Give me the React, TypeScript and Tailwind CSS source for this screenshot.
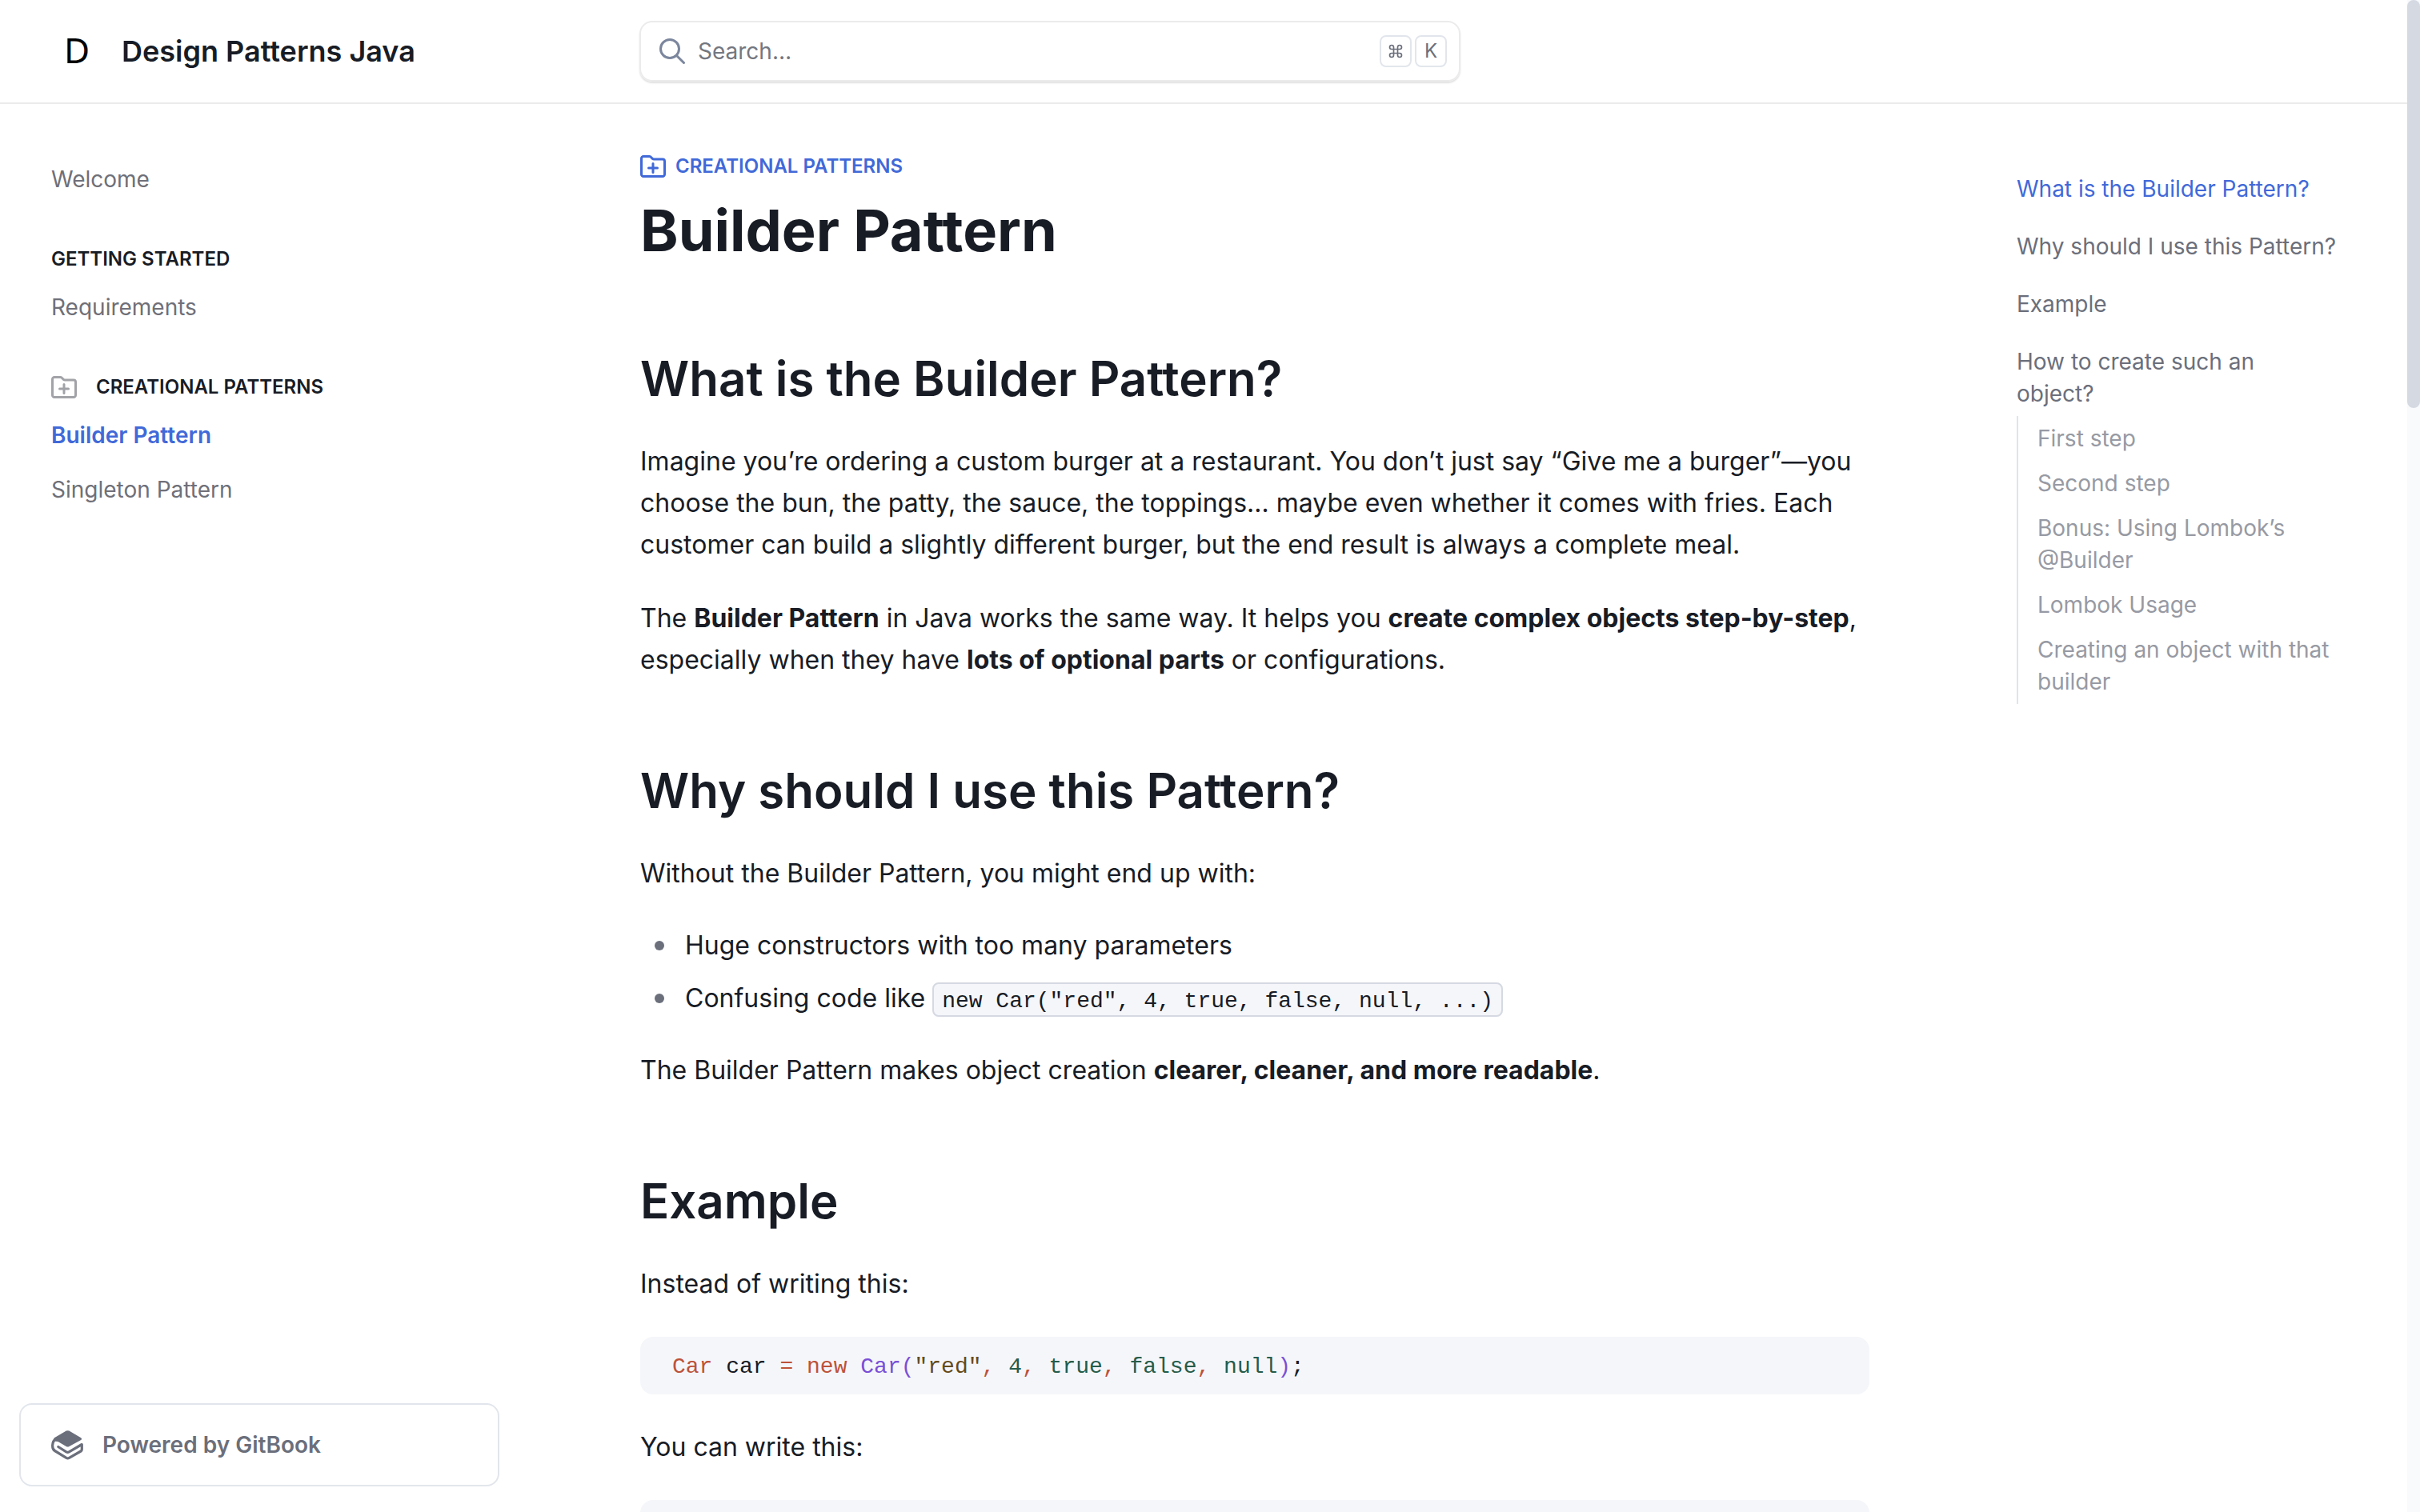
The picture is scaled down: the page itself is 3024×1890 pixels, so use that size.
import React from "react";
import { Command } from "lucide-react";

function FolderPlusIcon({ className }: { className: string }) {
  return (
    <svg viewBox="0 0 32 32" fill="none" stroke="currentColor" strokeWidth="3" strokeLinecap="round" strokeLinejoin="round" className={className} aria-hidden="true">
      <path d="M4 3.5h7.4c.7 0 1.3.3 1.8.7l2.200 2.200c.5.500 1.100.7 1.800.7H28a2.500 2.500 0 0 1 2.500 2.500V26a2.500 2.500 0 0 1-2.500 2.500H4A2.500 2.500 0 0 1 1.500 26V6A2.500 2.500 0 0 1 4 3.500Z" />
      <path d="M16 12.500v11M10.500 18h11" />
    </svg>
  );
}

function SearchIcon() {
  return (
    <svg viewBox="0 0 32 32" fill="none" stroke="currentColor" strokeWidth="3" strokeLinecap="round" className="size-8 shrink-0 text-[#7b869d]" aria-hidden="true">
      <circle cx="13" cy="13" r="11.500" />
      <path d="m21.500 21.500 9 9" />
    </svg>
  );
}

function GitBookIcon() {
  return (
    <svg viewBox="0 0 40 40" fill="currentColor" className="size-10 shrink-0" aria-hidden="true">
      <path d="M18.800 2.600a4 4 0 0 1 3.600 0l14.800 8.600c1.100.7 1.100 2.100 0 2.800L22.500 22a4 4 0 0 1-3.800 0L8.500 16 4 15.500 3.500 11.500z" />
      <path
        fill="none"
        stroke="currentColor"
        strokeWidth="3.200"
        strokeLinejoin="round"
        strokeLinecap="round"
        d="M6 12.500C.8 15.500.2 25 4.500 27.500L18.900 36.300a3.500 3.500 0 0 0 3.500 0L37 28a2.500 2.500 0 0 0 1.300-2.200V19.500L22.300 28.800a3.500 3.500 0 0 1-3.500 0L8.800 22.500"
      />
    </svg>
  );
}

function NavLink({ children, active }: { children: React.ReactNode; active?: boolean }) {
  return (
    <li>
      <a href="#" className={active ? "block py-3 text-[28px] leading-10 font-semibold text-[#4169d8]" : "block py-3 text-[28px] leading-10 text-[#6f7078]"}>
        {children}
      </a>
    </li>
  );
}

function H2({ children }: { children: React.ReactNode }) {
  return <h2 className="mt-15 text-[60px] leading-[75px] font-semibold">{children}</h2>;
}

function Bullet({ children }: { children: React.ReactNode }) {
  return (
    <li className="flex items-center gap-2">
      <span className="flex w-12 justify-center">
        <span className="size-3 rounded-full bg-[#6b6f7b]" />
      </span>
      <span>{children}</span>
    </li>
  );
}

const tocTop = ["Why should I use this Pattern?", "Example", "How to create such an object?"];
const tocSub = ["First step", "Second step", "Bonus: Using Lombok’s @Builder", "Lombok Usage", "Creating an object with that builder"];

export default function App() {
  return (
    <div className="flex h-screen overflow-hidden bg-white font-['Inter',sans-serif] text-[#181c25]">
      <div className="flex min-w-0 flex-1 flex-col">
        <header className="flex h-[130px] shrink-0 items-center border-b-2 border-[#ebebec] px-16">
          <a href="#" className="flex w-[735px] shrink-0 items-center gap-6">
            <span className="flex size-16 items-center justify-center pb-1 font-['Noto_Sans',sans-serif] text-[44px] text-black">D</span>
            <span className="text-4xl font-semibold">Design Patterns Java</span>
          </a>
          <div className="flex h-[76px] w-[1026px] items-center gap-4 rounded-2xl border-2 border-[#ebebec] pr-[15px] pl-[23px] shadow-[0_2px_2px_rgba(0,0,0,0.12)]">
            <SearchIcon />
            <input type="text" aria-label="Search" placeholder="Search…" className="min-w-0 flex-1 text-[28px] leading-10 outline-none placeholder:text-[#74777f]" />
            <div className="flex gap-1 text-2xl text-[#6b6f7b]">
              <kbd className="flex size-10 items-center justify-center rounded-lg border-2 border-[#e2e6ec]">
                <Command className="size-5" />
              </kbd>
              <kbd className="flex size-10 items-center justify-center rounded-lg border-2 border-[#e2e6ec] font-['Inter',sans-serif]">K</kbd>
            </div>
          </div>
        </header>

        <div className="flex min-h-0 flex-1 px-16">
          <aside className="-ml-10 flex w-[600px] shrink-0 flex-col justify-between pb-8">
            <nav className="flex flex-col gap-10 px-10 pt-[62px]" aria-label="Pages">
              <ul>
                <NavLink>Welcome</NavLink>
              </ul>
              <section>
                <h3 className="py-3 text-2xl leading-8 font-semibold">GETTING STARTED</h3>
                <ul>
                  <NavLink>Requirements</NavLink>
                </ul>
              </section>
              <section>
                <h3 className="flex items-center gap-6 py-3 text-2xl leading-8 font-semibold">
                  <FolderPlusIcon className="size-8 text-[#a2a3a8]" />
                  CREATIONAL PATTERNS
                </h3>
                <ul className="flex flex-col gap-1">
                  <NavLink active>Builder Pattern</NavLink>
                  <NavLink>Singleton Pattern</NavLink>
                </ul>
              </section>
            </nav>
            <a href="#" className="flex h-[104px] items-center gap-6 rounded-2xl border-2 border-[#e2e6ec] px-[38px] text-[28px] leading-10 font-semibold text-[#6b6f7b]">
              <GitBookIcon />
              Powered by GitBook
            </a>
          </aside>

          <main className="min-w-0 flex-1 pl-44">
            <article className="flex max-w-[1536px] flex-col gap-10 pt-[62px] text-[32px] leading-[52px]">
              <header className="flex flex-col gap-4">
                <a href="#" className="flex items-center gap-3 text-2xl leading-8 font-semibold text-[#4169d8]">
                  <FolderPlusIcon className="size-8" />
                  CREATIONAL PATTERNS
                </a>
                <h1 className="text-7xl leading-24 font-bold">Builder Pattern</h1>
              </header>
              <H2>What is the Builder Pattern?</H2>
              <p>
                Imagine you’re ordering a custom burger at a restaurant. You don’t just say “Give me a burger”—you choose the bun, the patty, the sauce, the toppings… maybe even whether it comes with fries. Each customer can build a slightly different burger, but the end result is always a complete meal.
              </p>
              <p>
                The <strong>Builder Pattern</strong> in Java works the same way. It helps you <strong>create complex objects step-by-step</strong>, especially when they have <strong>lots of optional parts</strong> or configurations.
              </p>
              <H2>Why should I use this Pattern?</H2>
              <p>Without the Builder Pattern, you might end up with:</p>
              <ul className="flex flex-col gap-[18px] leading-12">
                <Bullet>Huge constructors with too many parameters</Bullet>
                <Bullet>
                  Confusing code like{" "}
                  <code className="rounded-lg border-2 border-[#d5d9e2] bg-[#f5f6fa] px-[10px] pt-1.5 pb-0.5 font-['Liberation_Mono',monospace] text-[28px] leading-8">new Car("red", 4, true, false, null, ...)</code>
                </Bullet>
              </ul>
              <p>
                The Builder Pattern makes object creation <strong>clearer, cleaner, and more readable</strong>.
              </p>
              <H2>Example</H2>
              <p>Instead of writing this:</p>
              <pre className="rounded-2xl bg-[#f5f6fa] px-10 pt-4.5 pb-3.5 font-['Liberation_Mono',monospace] text-[28px] leading-10">
                <code>
                  <span className="text-[#bd5238]">Car</span> car <span className="text-[#bd5238]">=</span> <span className="text-[#bd5238]">new</span> <span className="text-[#7a4fd6]">Car(</span>
                  <span className="text-[#654a17]">"red"</span>
                  <span className="text-[#bd5238]">,</span> <span className="text-[#265c4a]">4</span>
                  <span className="text-[#bd5238]">,</span> <span className="text-[#265c4a]">true</span>
                  <span className="text-[#bd5238]">,</span> <span className="text-[#265c4a]">false</span>
                  <span className="text-[#bd5238]">,</span> <span className="text-[#265c4a]">null</span>
                  <span className="text-[#7a4fd6]">)</span>;
                </code>
              </pre>
              <p>You can write this:</p>
              <div className="h-18 rounded-2xl bg-[#f5f6fa]" />
            </article>
          </main>

          <nav className="w-[424px] shrink-0 pt-[78px] pr-6 text-[28px] leading-10 text-[#6b6f7b]" aria-label="On this page">
            <ul className="flex flex-col gap-4">
              <li>
                <a href="#" className="block py-2 text-[#4169d8]">What is the Builder Pattern?</a>
              </li>
              {tocTop.map((t) => (
                <li key={t}>
                  <a href="#" className="block py-2">{t}</a>
                </li>
              ))}
            </ul>
            <ul className="border-l-2 border-[#dfe4ea] pl-6 text-[#979aa3]">
              {tocSub.map((t) => (
                <li key={t}>
                  <a href="#" className="block py-2">{t}</a>
                </li>
              ))}
            </ul>
          </nav>
        </div>
      </div>
      <div className="w-4 shrink-0 bg-[#f8fafc]">
        <div className="h-[27%] rounded-full bg-[#d5d9e2]" />
      </div>
    </div>
  );
}
